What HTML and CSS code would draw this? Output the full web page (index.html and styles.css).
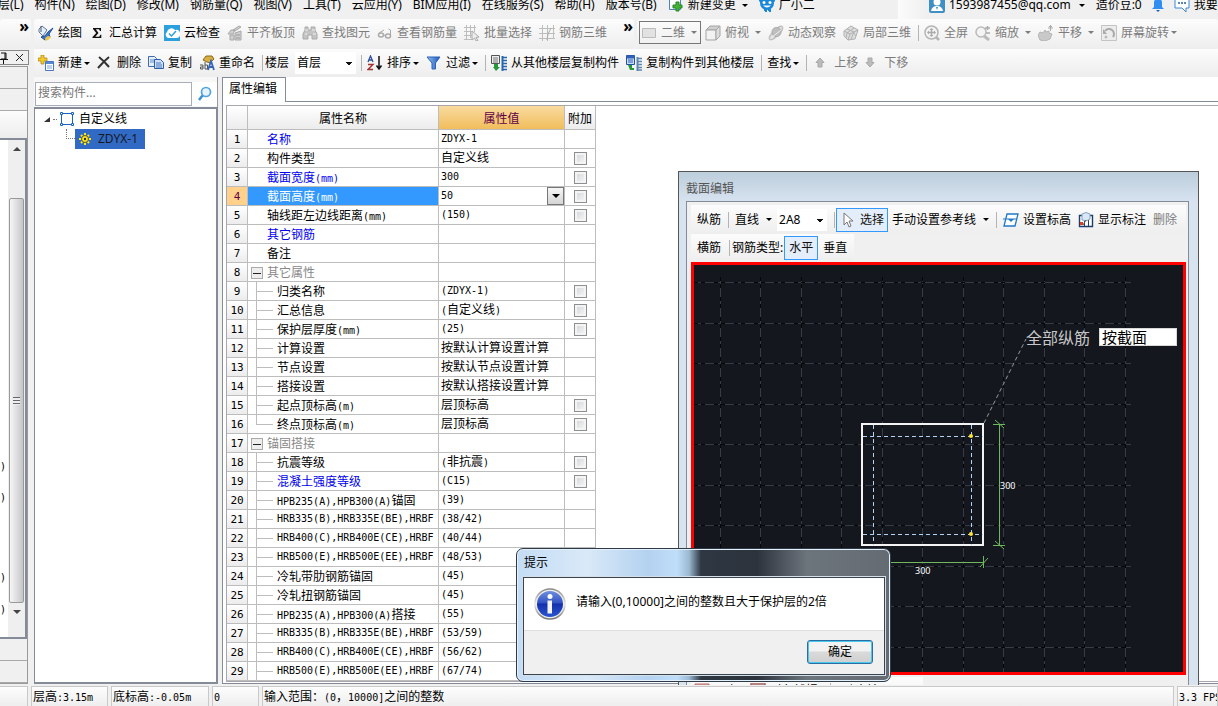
FILE: index.html
```html
<!DOCTYPE html>
<html lang="zh-CN">
<head>
<meta charset="utf-8">
<title>属性编辑</title>
<link rel="stylesheet" href="styles.css">
</head>
<body>
<svg class="defs" aria-hidden="true">
  <defs>
    <linearGradient id="funnel-fill" x1="0" x2="1"><stop offset="0" stop-color="#8fc0f4"/><stop offset="1" stop-color="#1d56b8"/></linearGradient>
    <linearGradient id="info-fill" x1="0" y1="0" x2="0" y2="1"><stop offset="0" stop-color="#6f8fdc"/><stop offset=".45" stop-color="#3454c4"/><stop offset=".5" stop-color="#1430ac"/><stop offset="1" stop-color="#2a55cf"/></linearGradient>
    <linearGradient id="ring-fill" x1="0" y1="0" x2="0" y2="1"><stop offset="0" stop-color="#8a8a8a"/><stop offset=".5" stop-color="#e8e8e8"/><stop offset="1" stop-color="#777"/></linearGradient>
    <symbol id="i-paint" viewBox="0 0 16 16"><path d="M1 4l3-3 5 4-4 6-4-4z" fill="#e8eef8" stroke="#5d7696"/><path d="M3 1v6" stroke="#44597a"/><path d="M15 3l-4 6 1 3-5 3-4-3 4-1 3-4z" fill="#3c78c8" stroke="#1f4a91"/><path d="M7 15c0-3 2-4 4-4l2 1c-2 3-4 4-6 3z" fill="#efc34c"/></symbol>
    <symbol id="i-sigma" viewBox="0 0 16 16"><path d="M4 3h8v3h-1l-1-1.800H6.800L9.500 8l-3.200 3.800h4l1-2h1V13H3.500v-1l3.700-4-3.200-4z" fill="#111"/></symbol>
    <symbol id="i-cloud" viewBox="0 0 16 16"><path d="M0 0h16v16H0z" fill="#2ba0dc"/><path d="M4 13a3.500 3.500 0 01-1-6 4.500 4.500 0 018-2 4 4 0 012 8z" fill="#fff"/><path d="M5 8.500l2.500 2.500L12 6" fill="none" stroke="#2ba0dc" stroke-width="1.500"/></symbol>
    <symbol id="i-slab" viewBox="0 0 16 16"><path d="M1 9l3-4h4l-2 4zM6 5l6-4 2 1-6 4zM3 10h4v5H3zM8 8l6-2v9H8z" fill="#cfcfcf" stroke="#a8a8a8"/><path d="M9 10h4M9 13h4" stroke="#999"/></symbol>
    <symbol id="i-bino" viewBox="0 0 16 16"><path d="M3 2h3v3h3V2h4v3l2 4v5h-5v-4H6v4H1V9l2-4z" fill="#c4c4c4" stroke="#aaa"/><path d="M3 9h2M11 9h3M3 5h3M10 5h3" stroke="#eee"/></symbol>
    <symbol id="i-glasses" viewBox="0 0 16 16"><ellipse cx="4" cy="10" rx="2.500" ry="2" fill="none" stroke="#aaa" stroke-width="1.500"/><ellipse cx="11" cy="11" rx="2.500" ry="2" fill="none" stroke="#aaa" stroke-width="1.500"/><path d="M6.500 10l2 .5M2 8l5-3M13.500 10V5l-2-1" fill="none" stroke="#aaa"/></symbol>
    <symbol id="i-batch" viewBox="0 0 16 16"><path d="M0 2.500h12M0 6.500h9M0 10.500h9M2.500 0v15M6.500 0v13M10.500 0v7M0 14.500h8" stroke="#bdbdbd" fill="none"/><path d="M8 6l7 6-3 .5 2 3-2 .5-1.500-3L8 15z" fill="#eee" stroke="#aaa"/></symbol>
    <symbol id="i-rebar" viewBox="0 0 16 16"><path d="M0 3.500h16M0 8.500h16M0 13.500h16M3.500 0v16M8.500 0v16M14.500 0v14" stroke="#bdbdbd" fill="none"/><path d="M12 3q-4 6-4 12" stroke="#aaa" fill="none"/></symbol>
    <symbol id="i-plane" viewBox="0 0 16 16"><path d="M1.500 3.500h13v9h-13z" fill="#e2e2e2" stroke="#bbb"/></symbol>
    <symbol id="i-cube" viewBox="0 0 16 16"><path d="M1 5l4-4h10l-4 4z" fill="#cfcfcf" stroke="#a5a5a5"/><path d="M1 5h10v10H1z" fill="#f2f2f2" stroke="#a5a5a5"/><path d="M11 5l4-4v10l-4 4z" fill="#ddd" stroke="#a5a5a5"/></symbol>
    <symbol id="i-orbit" viewBox="0 0 16 16"><ellipse cx="8" cy="8" rx="9" ry="3" transform="rotate(-45 8 8)" fill="#ddd" stroke="#bbb"/><circle cx="8.500" cy="7" r="4.500" fill="#bebebe" stroke="#aaa"/><path d="M3 13l10-8" stroke="#eee"/></symbol>
    <symbol id="i-local" viewBox="0 0 16 16"><path d="M1 6l7-5 7 4-3 9-7 1-4-4z" fill="#ddd" stroke="#b0b0b0"/><path d="M1 6l6 3 8-4M7 9l-2 6M4 4l7 3-3 7M11 3L4 8l-1 5M10 7l3 4" fill="none" stroke="#b0b0b0"/></symbol>
    <symbol id="i-full" viewBox="0 0 16 16"><circle cx="7.500" cy="7.500" r="6.500" fill="#f4f4f4" stroke="#b5b5b5" stroke-width="1.500"/><path d="M12 12l3 3" stroke="#b5b5b5" stroke-width="2.500"/><path d="M4 7.500h7M7.500 4v7" stroke="#aaa" stroke-width="1.500"/><path d="M3 7.500l2-2v4zM12 7.500l-2-2v4zM7.500 3l-2 2h4zM7.500 12l-2-2h4z" fill="#aaa"/></symbol>
    <symbol id="i-zoom" viewBox="0 0 16 16"><circle cx="6" cy="7" r="5" fill="#f4f4f4" stroke="#bbb" stroke-width="1.500"/><path d="M9 11l5 4" stroke="#bbb" stroke-width="3"/><path d="M10 3h5M12.500 1v4M11 8h4" stroke="#aaa" stroke-width="1.500"/></symbol>
    <symbol id="i-pan" viewBox="0 0 16 16"><path d="M2 7l3 1 2-3 1 2 3-1v2l3 1-2 5-5 2-5-1-2-5z" fill="#c9c9c9" stroke="#b5b5b5"/><path d="M10 3h5M12.500 0v6M11 1.500h3" stroke="#aaa"/></symbol>
    <symbol id="i-rotate" viewBox="0 0 16 16"><path d="M.5.5h15v15H.5z" fill="#ececec" stroke="#c4c4c4"/><path d="M4 6a5 5 0 118 6" fill="none" stroke="#aaa" stroke-width="2"/><path d="M2 4v5h4z" fill="#aaa"/><circle cx="5" cy="12" r="1.500" fill="#bbb"/></symbol>
    <symbol id="i-new" viewBox="0 0 16 16"><path d="M3 0h3v3h3v3H6v3H3V6H0V3h3z" fill="#f3c929" stroke="#a98112" stroke-width=".7"/><path d="M7.500 6.500h8v9h-8z" fill="#fff" stroke="#4a78c0"/><path d="M8 7h7v2H8z" fill="#5588d4"/><path d="M9 11h5M9 13h5" stroke="#7aa2dd"/></symbol>
    <symbol id="i-x" viewBox="0 0 16 16"><path d="M2 2q5 4 10 10M12 2Q7 6 1 13" fill="none" stroke="#333" stroke-width="2"/></symbol>
    <symbol id="i-copy" viewBox="0 0 16 16"><path d="M.5 1.500h6l2 2v8h-8z" fill="#e4eefc" stroke="#3f6cb0"/><path d="M2 5h5M2 7h5" stroke="#5e89c8"/><path d="M6.500 4.500h6l3 3v6h-9z" fill="#cfe0f8" stroke="#2d5ea8"/><path d="M8 8h5M8 10h6M8 12h6" stroke="#4b7ac0"/></symbol>
    <symbol id="i-rename" viewBox="0 0 16 16"><path d="M4 5l3-4h6l2 3-4 4-3-1z" fill="#d9ae45" stroke="#8b681b"/><path d="M1 10h3v4H1.500v-2H4M6 7v7h2.500v-4H6" fill="none" stroke="#555"/><path d="M9 15l3-9 3 9M10 12h4" fill="none" stroke="#3566b5" stroke-width="1.800"/></symbol>
    <symbol id="i-sort" viewBox="0 0 16 16"><path d="M1 7l2.500-6L6 7M2 5h3" fill="none" stroke="#2c4f9d" stroke-width="1.300"/><path d="M1 9.500h5l-5 5h5" fill="none" stroke="#a33232" stroke-width="1.400"/><path d="M12 1v12M9.500 10.500L12 14l2.500-3.500" fill="none" stroke="#111" stroke-width="1.500"/></symbol>
    <symbol id="i-funnel" viewBox="0 0 16 16"><path d="M1 2h13L9.500 8v6H6V8z" fill="url(#funnel-fill)" stroke="#2d63b8"/></symbol>
    <symbol id="i-from" viewBox="0 0 16 16"><path d="M.5.5h8v8h-8z" fill="#eee" stroke="#555"/><path d="M2 3h5M2 5h5M2 7h5" stroke="#777"/><path d="M11.500 1v15" stroke="#2767ae" stroke-width="2"/><path d="M12 2.500h4M12 5.500h4M12 8.500h4M12 11.500h4M12 14.500h4" stroke="#2767ae" stroke-width="1.500"/><path d="M3 9h4v3h2l-4 4-3-4h1z" fill="#27963c"/></symbol>
    <symbol id="i-to" viewBox="0 0 16 16"><path d="M.5.5h8v9h-8z" fill="#c9dbf5" stroke="#244f9e"/><path d="M1 1h7v2H1zM2 5h5M2 7h5" fill="#2e62ba" stroke="#2e62ba"/><path d="M11.500 2v14" stroke="#5f87b0" stroke-width="2"/><path d="M12 3.500h4M12 6.500h4M12 9.500h4M12 12.500h4M12 15h4" stroke="#5f87b0" stroke-width="1.500"/><path d="M2 10h4v3h2v2H4z" fill="#27963c"/></symbol>
    <symbol id="i-up" viewBox="0 0 16 16"><path d="M8 3l4 4.500h-2V12H6V7.500H4z" fill="#bbb" stroke="#a9a9a9"/></symbol>
    <symbol id="i-down" viewBox="0 0 16 16"><path d="M8 12l4-4.500h-2V3H6v4.500H4z" fill="#bbb" stroke="#a9a9a9"/></symbol>
    <symbol id="i-change" viewBox="0 0 16 16"><path d="M1.500 0v12.500h11V0" fill="#fff" stroke="#4787c4"/><path d="M8 5h3v3h3v3h-3v3H8v-3H5V8h3z" fill="#42b336" stroke="#2a8426"/></symbol>
    <symbol id="i-mascot" viewBox="0 0 16 16"><circle cx="8" cy="6" r="7" fill="#1b87d8"/><path d="M0 3l3 2M16 3l-3 2M5 13h2v2M9 13h2v2" stroke="#1b87d8" stroke-width="2"/><circle cx="5" cy="5.500" r="1.500" fill="#fff"/><circle cx="11" cy="5.500" r="1.500" fill="#fff"/><path d="M4 8.500q4 4 8 0z" fill="#fff"/></symbol>
    <symbol id="i-user" viewBox="0 0 16 16"><rect width="16" height="16" rx="2" fill="#3d8fc4"/><circle cx="8" cy="5" r="3.500" fill="#fff"/><path d="M2 14q1-5 6-5t6 5z" fill="#fff"/><path d="M7 10h2l-1 3z" fill="#3d8fc4"/></symbol>
    <symbol id="i-bell" viewBox="0 0 16 16"><path d="M4 10V5q1-4 4-4t4 4v5l2 2H2z" fill="#2e8ff0"/><path d="M6 13h4l-2 2z" fill="#1b62b0"/></symbol>
    <symbol id="i-chat" viewBox="0 0 16 16"><path d="M1 1h14v10h-3v4l-4-4H1z" fill="#fff" stroke="#3f86d6"/><path d="M4 6h2M7 6h2M10 6h2" stroke="#245da8" stroke-width="1.500"/></symbol>
    <symbol id="i-search" viewBox="0 0 16 16"><circle cx="9" cy="6" r="4.500" fill="#e6f4ff" stroke="#4fa3e0" stroke-width="1.700"/><path d="M5.500 9.500L2 14" stroke="#3a8fd4" stroke-width="2.500"/></symbol>
    <symbol id="i-frame" viewBox="0 0 16 16"><path d="M2.500 2.500h11v11h-11z" fill="#fff" stroke="#1763c6"/><path d="M1.500 1.500h2v2h-2zM12.500 1.500h2v2h-2zM1.500 12.500h2v2h-2zM12.500 12.500h2v2h-2z" fill="#fff" stroke="#1763c6"/></symbol>
    <symbol id="i-sun" viewBox="0 0 12 12"><path d="M6 0v12M0 6h12M2 2l8 8M10 2l-8 8" stroke="#ffe81a" stroke-width="2"/><circle cx="6" cy="6" r="3.500" fill="#ffe81a" stroke="#333" stroke-width=".8"/><circle cx="6" cy="6" r="1.200" fill="#333"/></symbol>
    <symbol id="i-cursor" viewBox="0 0 16 16"><path d="M4 1v12l3-3 2 5 2-1-2-5h4z" fill="#fff" stroke="#777"/></symbol>
    <symbol id="i-level" viewBox="0 0 16 16"><path d="M4 2h11l-3 12H1z" fill="#fff" stroke="#1f78c8" stroke-width="1.300"/><path d="M0 7h14" stroke="#1f78c8"/><path d="M5 7h6l-3 3z" fill="#1f78c8"/></symbol>
    <symbol id="i-dim" viewBox="0 0 16 16"><path d="M1.500 3.500h13v11h-13z" fill="#fff" stroke="#1b3e6d" stroke-width="1.400"/><path d="M6.500 7v8M10.500 7v8" stroke="#1b3e6d"/><path d="M4 2q4-3 8 0v5q-3 3-8 1z" fill="#d9e7f7" stroke="#8aa2bf"/><path d="M2 10h3v3H2z" fill="#e23b22"/><path d="M8 8l-3 5" stroke="#555"/></symbol>
    <symbol id="i-ortho" viewBox="0 0 16 16"><path d="M2 1h13v4H5v10H1V1z" fill="#e7a3a3" stroke="#b86a6a"/></symbol>
    <symbol id="i-snap" viewBox="0 0 16 16"><path d="M1 1h14v14H1z" fill="#fff" stroke="#a35b5b" stroke-width="1.500"/></symbol>
  </defs>
</svg>

<header class="menubar">
  <nav class="menus" aria-label="主菜单">
    <button>楼层(L)</button><button>构件(N)</button><button>绘图(D)</button><button>修改(M)</button><button>钢筋量(Q)</button><button>视图(V)</button><button>工具(T)</button><button>云应用(Y)</button><button>BIM应用(I)</button><button>在线服务(S)</button><button>帮助(H)</button><button>版本号(B)</button>
    <button><svg class="icon"><use href="#i-change"/></svg>新建变更<i class="caret"></i></button>
    <button><svg class="icon"><use href="#i-mascot"/></svg>广小二</button>
  </nav>
  <div class="account">
    <button><svg class="icon"><use href="#i-user"/></svg>1593987455@qq.com<i class="caret"></i></button>
    <span>造价豆:0</span>
    <button aria-label="通知"><svg class="icon"><use href="#i-bell"/></svg></button>
    <button><svg class="icon"><use href="#i-chat"/></svg>我要反馈</button>
  </div>
</header>

<div class="bar bar-view">
  <div class="strip strip-stub"><button aria-label="更多工具">»</button></div>
  <div class="strip strip-draw">
    <button><svg class="icon"><use href="#i-paint"/></svg>绘图</button>
    <button><svg class="icon"><use href="#i-sigma"/></svg>汇总计算</button>
    <button><svg class="icon"><use href="#i-cloud"/></svg>云检查</button>
    <button disabled><svg class="icon"><use href="#i-slab"/></svg>平齐板顶</button>
    <button disabled><svg class="icon"><use href="#i-bino"/></svg>查找图元</button>
    <button disabled><svg class="icon"><use href="#i-glasses"/></svg>查看钢筋量</button>
    <button disabled><svg class="icon"><use href="#i-batch"/></svg>批量选择</button>
    <button disabled><svg class="icon"><use href="#i-rebar"/></svg>钢筋三维</button>
    <button class="more" aria-label="更多">»</button>
  </div>
  <div class="strip strip-3d">
    <button class="boxed" disabled><svg class="icon"><use href="#i-plane"/></svg>二维<i class="caret far"></i></button>
    <button disabled><svg class="icon"><use href="#i-cube"/></svg>俯视<i class="caret"></i></button>
    <button disabled><svg class="icon"><use href="#i-orbit"/></svg>动态观察</button>
    <button disabled><svg class="icon"><use href="#i-local"/></svg>局部三维</button>
    <span class="sep"></span>
    <button disabled><svg class="icon"><use href="#i-full"/></svg>全屏</button>
    <button disabled><svg class="icon"><use href="#i-zoom"/></svg>缩放<i class="caret"></i></button>
    <button disabled><svg class="icon"><use href="#i-pan"/></svg>平移<i class="caret"></i></button>
    <button disabled><svg class="icon"><use href="#i-rotate"/></svg>屏幕旋转<i class="caret near"></i></button>
  </div>
</div>

<div class="workspace">
  <aside class="dock">
    <div class="dock-head">
      <button aria-label="固定"><svg width="8" height="12"><path d="M1 1h5v6H1M0 7.500h8M3.500 8v4M5 1v6" fill="none" stroke="#111"/></svg></button>
      <button aria-label="关闭"><svg width="9" height="9"><path d="M1 1l7 7M8 1L1 8" stroke="#222"/></svg></button>
    </div>
    <div class="dock-panel">
      <div class="dock-tab"></div>
      <div class="dock-tab"></div>
      <div class="dock-gap"></div>
      <div class="dock-list">
        <div class="dock-rows mono"><span class="r1">)</span><span class="r2">)</span><span class="r3">)</span><span class="r4">)</span></div>
        <div class="scroll">
          <i class="tri up"></i>
          <div class="thumb"><i class="grip"></i></div>
          <i class="tri down"></i>
        </div>
      </div>
      <div class="dock-tab"></div>
      <div class="dock-tab"></div>
    </div>
  </aside>

  <div class="content">
    <div class="bar bar-edit">
      <button><svg class="icon"><use href="#i-new"/></svg>新建<i class="caret near"></i></button>
      <button><svg class="icon"><use href="#i-x"/></svg>删除</button>
      <button><svg class="icon"><use href="#i-copy"/></svg>复制</button>
      <button><svg class="icon"><use href="#i-rename"/></svg>重命名</button>
      <span class="sep"></span>
      <label class="floor">楼层 <select><option>首层</option></select></label>
      <span class="sep"></span>
      <button><svg class="icon"><use href="#i-sort"/></svg>排序<i class="caret near"></i></button>
      <button><svg class="icon"><use href="#i-funnel"/></svg>过滤<i class="caret near"></i></button>
      <span class="sep"></span>
      <button><svg class="icon"><use href="#i-from"/></svg>从其他楼层复制构件</button>
      <button><svg class="icon"><use href="#i-to"/></svg>复制构件到其他楼层</button>
      <span class="sep"></span>
      <button>查找<i class="caret near"></i></button>
      <span class="sep"></span>
      <button disabled><svg class="icon"><use href="#i-up"/></svg>上移</button>
      <button disabled><svg class="icon"><use href="#i-down"/></svg>下移</button>
    </div>

    <div class="panes">
      <section class="members">
        <form class="search"><input type="text" placeholder="搜索构件..." aria-label="搜索构件"><button type="button" aria-label="搜索"><svg class="icon"><use href="#i-search"/></svg></button></form>
        <div class="tree">
          <div class="node"><svg width="7" height="7"><path d="M6 1v5H0z" fill="#333"/></svg><i class="dots"></i><svg class="icon"><use href="#i-frame"/></svg><span>自定义线</span></div>
          <div class="leaf"><i class="elbow"></i><span class="picked"><svg width="12" height="12"><use href="#i-sun"/></svg>ZDYX-1</span></div>
        </div>
      </section>

      <section class="props">
        <div class="tabs"><button class="tab">属性编辑</button></div>
        <div class="sheet">
          <table>
            <colgroup><col class="c-no"><col class="c-name"><col class="c-val"><col class="c-add"></colgroup>
            <thead><tr><th></th><th>属性名称</th><th class="hot">属性值</th><th>附加</th></tr></thead>
            <tbody>
              <tr><th>1</th><td class="top key">名称</td><td class="mono">ZDYX-1</td><td></td></tr>
              <tr><th>2</th><td class="top">构件类型</td><td>自定义线</td><td><input type="checkbox" aria-label="附加构件类型"></td></tr>
              <tr><th>3</th><td class="top key">截面宽度<span class="mono">(mm)</span></td><td class="mono">300</td><td><input type="checkbox" aria-label="附加截面宽度"></td></tr>
              <tr class="current"><th>4</th><td class="top key">截面高度<span class="mono">(mm)</span></td><td><div class="combo"><input class="mono" type="text" value="50" aria-label="截面高度"><button aria-label="展开"><i class="caret"></i></button></div></td><td><input type="checkbox" aria-label="附加截面高度"></td></tr>
              <tr><th>5</th><td class="top">轴线距左边线距离<span class="mono">(mm)</span></td><td class="mono">(150)</td><td><input type="checkbox" aria-label="附加轴线距离"></td></tr>
              <tr><th>6</th><td class="top key">其它钢筋</td><td></td><td></td></tr>
              <tr><th>7</th><td class="top">备注</td><td></td><td></td></tr>
              <tr><th>8</th><td class="group"><div><button aria-label="折叠其它属性"></button>其它属性</div></td><td></td><td></td></tr>
              <tr><th>9</th><td class="sub">归类名称</td><td class="mono">(ZDYX-1)</td><td><input type="checkbox" aria-label="附加归类名称"></td></tr>
              <tr><th>10</th><td class="sub">汇总信息</td><td><span class="mono">(</span>自定义线<span class="mono">)</span></td><td><input type="checkbox" aria-label="附加汇总信息"></td></tr>
              <tr><th>11</th><td class="sub">保护层厚度<span class="mono">(mm)</span></td><td class="mono">(25)</td><td><input type="checkbox" aria-label="附加保护层厚度"></td></tr>
              <tr><th>12</th><td class="sub">计算设置</td><td>按默认计算设置计算</td><td></td></tr>
              <tr><th>13</th><td class="sub">节点设置</td><td>按默认节点设置计算</td><td></td></tr>
              <tr><th>14</th><td class="sub">搭接设置</td><td>按默认搭接设置计算</td><td></td></tr>
              <tr><th>15</th><td class="sub">起点顶标高<span class="mono">(m)</span></td><td>层顶标高</td><td><input type="checkbox" aria-label="附加起点顶标高"></td></tr>
              <tr><th>16</th><td class="sub last">终点顶标高<span class="mono">(m)</span></td><td>层顶标高</td><td><input type="checkbox" aria-label="附加终点顶标高"></td></tr>
              <tr><th>17</th><td class="group"><div><button aria-label="折叠锚固搭接"></button>锚固搭接</div></td><td></td><td></td></tr>
              <tr><th>18</th><td class="sub">抗震等级</td><td><span class="mono">(</span>非抗震<span class="mono">)</span></td><td><input type="checkbox" aria-label="附加抗震等级"></td></tr>
              <tr><th>19</th><td class="sub key">混凝土强度等级</td><td class="mono">(C15)</td><td><input type="checkbox" aria-label="附加混凝土强度等级"></td></tr>
              <tr><th>20</th><td class="sub"><span class="mono">HPB235(A),HPB300(A)</span>锚固</td><td class="mono">(39)</td><td></td></tr>
              <tr><th>21</th><td class="sub mono">HRB335(B),HRB335E(BE),HRBF</td><td class="mono">(38/42)</td><td></td></tr>
              <tr><th>22</th><td class="sub mono">HRB400(C),HRB400E(CE),HRBF</td><td class="mono">(40/44)</td><td></td></tr>
              <tr><th>23</th><td class="sub mono">HRB500(E),HRB500E(EE),HRBF</td><td class="mono">(48/53)</td><td></td></tr>
              <tr><th>24</th><td class="sub">冷轧带肋钢筋锚固</td><td class="mono">(45)</td><td></td></tr>
              <tr><th>25</th><td class="sub">冷轧扭钢筋锚固</td><td class="mono">(45)</td><td></td></tr>
              <tr><th>26</th><td class="sub"><span class="mono">HPB235(A),HPB300(A)</span>搭接</td><td class="mono">(55)</td><td></td></tr>
              <tr><th>27</th><td class="sub mono">HRB335(B),HRB335E(BE),HRBF</td><td class="mono">(53/59)</td><td></td></tr>
              <tr><th>28</th><td class="sub mono">HRB400(C),HRB400E(CE),HRBF</td><td class="mono">(56/62)</td><td></td></tr>
              <tr><th>29</th><td class="sub mono">HRB500(E),HRB500E(EE),HRBF</td><td class="mono">(67/74)</td><td></td></tr>
            </tbody>
          </table>
        </div>
      </section>
    </div>
  </div>

  <section class="editor" aria-label="截面编辑">
    <h2>截面编辑</h2>
    <div class="editor-body">
      <div class="tools tools-top">
        <button>纵筋</button><span class="sep"></span>
        <button>直线<i class="caret"></i></button>
        <select class="spec" aria-label="钢筋规格"><option>2A8</option></select><span class="sep"></span>
        <button class="on"><svg class="icon"><use href="#i-cursor"/></svg>选择</button>
        <button>手动设置参考线<i class="caret"></i></button><span class="sep"></span>
        <button><svg class="icon"><use href="#i-level"/></svg>设置标高</button>
        <button><svg class="icon"><use href="#i-dim"/></svg>显示标注</button>
        <button disabled>删除</button>
      </div>
      <div class="tools tools-type">
        <button>横筋</button><span class="sep"></span><span>钢筋类型:</span><button class="on">水平</button><button>垂直</button>
      </div>
      <div class="canvas">
        <svg class="drawing" width="100%" height="100%">
          <defs><path id="grid" d="M0 17.500h437M0 58.500h437M0 98.500h437M0 139.500h437M0 179.500h437M0 220.500h437M0 260.500h437M0 301.500h437M0 341.500h437M0 382.500h437M26.500 12v400M66.500 12v400M107.500 12v400M147.500 12v400M188.500 12v400M228.500 12v400M269.500 12v400M309.500 12v400M350.500 12v400M390.500 12v400M431.500 12v400"/></defs>
          <use href="#grid" stroke="#363c46"/>
          <use href="#grid" stroke="#050608" stroke-dasharray="4 3 4 9"/>
          <path d="M290 158L332 74" stroke="#999" stroke-dasharray="4 3"/>
          <path d="M168 159h121v121H168z" fill="none" stroke="#f4f4f4" stroke-width="2"/>
          <path d="M169 171.500h120M169 269.500h120M179.500 160v120M277.500 160v120" stroke="#b4d2f4" stroke-dasharray="4 3"/>
          <circle cx="277" cy="171" r="2" fill="#ffe42e"/><circle cx="277" cy="269" r="2" fill="#ffe42e"/>
          <path d="M305.500 159v122M299 159.500h12M299 280.500h12M301 155l9 8M301 276l9 8M180 297.500h110M289.500 291v12M286 302l8-9" fill="none" stroke="#6fb85f"/>
          <text x="306" y="224">300</text><text x="221" y="309">300</text>
          <text class="note" x="332" y="79">全部纵筋</text>
        </svg>
        <input class="inline-edit" type="text" value="按截面" aria-label="全部纵筋">
      </div>
      <div class="tools tools-foot"><button><svg class="icon"><use href="#i-ortho"/></svg>正交</button><button><svg class="icon"><use href="#i-snap"/></svg>对象捕捉</button><span class="sep"></span><button>动态输入</button></div>
    </div>
  </section>

  <div class="dialog" role="dialog" aria-labelledby="tip-title">
    <h2 id="tip-title">提示</h2>
    <div class="dialog-body">
      <div class="message">
        <svg width="32" height="32"><circle cx="16" cy="16" r="15" fill="#eee" stroke="url(#ring-fill)" stroke-width="1.500"/><circle cx="16" cy="16" r="13" fill="url(#info-fill)"/><circle cx="16" cy="8.500" r="2.500" fill="#fff"/><path d="M13.500 12.500h4.500v13h-4.500z" fill="#f4f4f4"/></svg>
        <p>请输入(0,10000]之间的整数且大于保护层的2倍</p>
      </div>
      <div class="actions"><button>确定</button></div>
    </div>
  </div>
</div>

<footer class="status">
  <span class="s-stub"></span>
  <span class="s-height">层高<b class="mono">:3.15m</b></span>
  <span class="s-base">底标高<b class="mono">:-0.05m</b></span>
  <span class="s-count"><b class="mono">0</b></span>
  <span class="s-hint">输入范围：<b class="mono">(0</b>，<b class="mono">10000]</b>之间的整数</span>
  <span class="s-fps"><b class="mono">3.3 FPS</b></span>
</footer>
</body>
</html>
```
FILE: styles.css
```css
* { box-sizing: border-box; }
body {
  margin: 0;
  height: 100vh;
  display: flex;
  flex-direction: column;
  overflow: hidden;
  background: #f0f0f0;
  color: #000;
  font: 12px/16px "Noto Sans", "Noto Sans CJK SC", sans-serif;
}
button, input, select { font: inherit; color: inherit; }
button { border: 0; padding: 0; background: none; display: flex; align-items: center; white-space: nowrap; gap: 4px; }
button:disabled { color: #7c7c7c; }
.mono { font-family: "DejaVu Sans Mono", "Noto Sans CJK SC", monospace; font-size: 10px; font-weight: normal; line-height: 16px; }
.defs { position: absolute; width: 0; height: 0; }
.icon { width: 16px; height: 16px; flex: none; }
.caret { width: 0; height: 0; border: 3px solid transparent; border-top-color: currentColor; border-bottom: 0; margin: 0 0 0 2px; }
.caret.near { margin-left: -2px; }
.sep { width: 1px; height: 16px; background: #b4b4b4; flex: none; }

/* menu bar */
.menubar { display: flex; justify-content: space-between; height: 19px; flex: none; white-space: nowrap; }
.menubar button, .menubar span { line-height: 10px; height: 10px; flex: none; }
.menus { display: flex; gap: 11px; margin-left: -14px; }
.account { display: flex; gap: 8px; width: 320px; padding-left: 31px; overflow: hidden; background: linear-gradient(90deg, #fbfbfb, #f0f0f0 28px); }
.account .caret { margin: 0 3px 0 4px; }

/* toolbars */
.bar { display: flex; flex: none; }
.bar-view { height: 30px; gap: 3px; }
.strip { display: flex; align-items: center; gap: 7px; padding-bottom: 3px; background: linear-gradient(#fcfcfc, #ededed); border-radius: 3px; }
.strip-stub { width: 31px; flex: none; justify-content: flex-end; align-items: flex-start; padding: 0 2px; }
.strip-stub button, .more { font-size: 16px; font-weight: bold; line-height: 14px; }
.strip-draw { padding-left: 4px; width: 600px; flex: none; }
.more { margin: -14px 0 0 9px; }
.strip-3d { flex: 1; padding-left: 2px; }
.strip-3d .caret { margin-left: 2px; }
.strip-3d .caret.near { margin-left: -2px; }
.strip-3d .sep { margin-right: -2px; }
.boxed { border: 1px solid #777; height: 23px; width: 62px; padding: 0 1px; margin-right: -3px; }
.bar-edit { height: 28px; align-items: center; gap: 7px; padding: 0 0 0 4px; background: linear-gradient(#fcfcfc, #ededed); }
.bar-edit .sep { margin-right: -2px; }
.bar-edit button:disabled { gap: 6px; margin-right: -3px; }
.floor { display: flex; align-items: center; gap: 6px; margin: 0 -2px 0 -3px; }
select {
  appearance: none;
  border: 0;
  background:
    linear-gradient(#111, #111) no-repeat right 4px top 10px / 6px 1px,
    linear-gradient(#111, #111) no-repeat right 5px top 11px / 4px 1px,
    linear-gradient(#111, #111) no-repeat right 6px top 12px / 2px 1px,
    #fff;
}
.floor select { width: 61px; height: 22px; padding: 0 2px; }

/* workspace */
.workspace { position: relative; flex: 1; display: flex; min-height: 0; overflow: hidden; gap: 5px; }
.content { flex: 1; display: flex; flex-direction: column; min-width: 0; }
.panes { flex: 1; display: flex; gap: 4px; min-height: 0; padding-bottom: 2px; }
.dock { width: 29px; flex: none; display: flex; flex-direction: column; padding-bottom: 2px; }
.dock-head { display: flex; align-items: center; justify-content: space-between; height: 15px; margin-top: 1px; padding-right: 4px; border: 1px solid #888; border-left: 0; }
.dock-panel { flex: 1; display: flex; flex-direction: column; border: 1px solid #999; border-left: 0; margin-right: 1px; margin-top: 1px; }
.dock-tab { height: 22px; border-bottom: 1px solid #aaa; }
.dock-gap { height: 27px; background: linear-gradient(#fcfcfc, #ededed); }
.dock-list { flex: 1; display: flex; border: 2px solid #858b98; border-left: 0; background: #fff; min-height: 0; }
.dock-rows { flex: 1; position: relative; }
.dock-rows span { position: absolute; left: 0; }
.r1 { bottom: 162px; } .r2 { bottom: 131px; } .r3 { bottom: 51px; } .r4 { bottom: 19px; }
.scroll { width: 17px; display: flex; flex-direction: column; align-items: center; background: #efefef; padding: 7px 0 23px; }
.thumb { flex: 1; width: 15px; margin: 47px 0 7px; border: 1px solid #999; border-radius: 2px; background: linear-gradient(90deg, #f6f6f6, #c6c6ca); display: flex; align-items: center; justify-content: center; }
.grip { width: 7px; height: 8px; background: repeating-linear-gradient(#666 0 1px, #eee 1px 3px); }
.tri { border: 4px solid transparent; height: 0; width: 0; }
.tri.up { border-bottom-color: #444; border-top: 0; }
.tri.down { border-top-color: #444; border-bottom: 0; }

/* member tree */
.members { width: 184px; flex: none; display: flex; flex-direction: column; }
.search { display: flex; height: 30px; padding: 5px 0 1px 1px; background: #f7f7f7; border-right: 1px solid #999; }
.search input { width: 157px; border: 1px solid #a9adb8; padding: 0 2px 3px; background: #fff; }
.search input::placeholder { color: #777; opacity: 1; }
.search button { flex: 1; justify-content: center; background: #fff; }
.tree { flex: 1; border: 2px solid #858b98; border-left-width: 1px; background: #fff; }
.node { display: flex; align-items: center; height: 20px; padding-left: 9px; }
.dots { width: 4px; margin: 0 2px; border-top: 1px dotted #777; }
.node span { margin-left: 4px; }
.leaf { display: flex; height: 20px; padding-left: 31px; }
.elbow { width: 9px; height: 10px; border: 1px dotted #777; border-width: 0 0 1px 1px; }
.picked { display: flex; align-items: center; gap: 7px; width: 70px; padding-left: 4px; background: #316ac5; color: #16181d; }

/* property sheet */
.props { flex: 1; display: flex; flex-direction: column; min-width: 0; background: #fff; border-left: 1px solid #858b98; border-bottom: 1px solid #858b98; padding-bottom: 1px; }
.tabs { height: 25px; flex: none; display: flex; border-bottom: 1px solid #858b98; }
.tab { height: 25px; width: 63px; padding: 0 6px 2px; border: 1px solid #858b98; border-width: 1px 1px 0 0; background: #fff; }
.sheet { flex: 1; min-height: 0; overflow: hidden; margin: 3px 0 0 3px; border: 1px solid #a7a7ad; border-right: 0; }
table { table-layout: fixed; width: 369px; border-collapse: separate; border-spacing: 0; }
.c-no { width: 21px; } .c-name { width: 191px; } .c-val { width: 126px; } .c-add { width: 31px; }
th, td { padding: 0; height: 19px; line-height: 16px; border-right: 1px solid #bdbdbd; border-bottom: 1px solid #bdbdbd; font-weight: normal; white-space: nowrap; overflow: hidden; }
td span.mono { line-height: 10px; }
th { background: linear-gradient(#fff, #ececec); text-align: center; }
thead th { height: 24px; padding-top: 2px; }
tbody th { font-family: "DejaVu Sans Mono", monospace; font-size: 11px; padding-top: 1px; }
thead .hot { background: linear-gradient(#f9dba0, #f1bd5c); color: #620046; }
tbody td:nth-child(2) { padding-top: 2px; }
tbody td.mono:nth-child(2) { padding-top: 0; }
tbody td:nth-child(3) { padding-left: 2px; }
tbody td:nth-child(4) { text-align: center; }
.top { padding-left: 19px; }
.key { color: #00e; }
.current th { background: #ffd18a; color: #620046; }
.current .key { background: #3399ff; color: #fff; }
.sub { padding-left: 29px; background: linear-gradient(#bdbdbd, #bdbdbd) no-repeat 8px 0 / 1px 100%, linear-gradient(#bdbdbd, #bdbdbd) no-repeat 8px 9px / 17px 1px; }
.sub.last { background-size: 1px 10px, 17px 1px; }
.group { color: #888; }
.group div { display: flex; align-items: center; gap: 4px; height: 16px; padding-left: 3px; }
.group button { width: 12px; height: 12px; border: 1px solid #aaa; background: linear-gradient(#222, #222) no-repeat center / 8px 1px, #eee; }
input[type="checkbox"] { appearance: none; display: block; width: 13px; height: 13px; margin: 0 auto; border: 1px solid #8e8f8f; background: linear-gradient(135deg, #cfd2d6, #fafafa); box-shadow: inset 0 0 0 2px #f4f4f4; }
.combo { display: flex; height: 18px; }
.combo input { flex: 1; min-width: 0; border: 0; padding: 0; background: none; }
.combo button { width: 17px; justify-content: center; border: 1px solid #777; background: linear-gradient(#f6f6f6, #d4d4d4); }
.combo .caret { margin: 0; border-width: 4px 4px 0; }

/* section editor window */
.editor { position: absolute; left: 678px; top: 122px; bottom: 1px; width: 521px; display: flex; flex-direction: column; padding: 0 9px 0 7px; border: 1px solid #555; border-bottom: 0; background: linear-gradient(#bccddb, #d8e3f0 30px); }
h2 { margin: 0; font-size: 12px; font-weight: normal; }
.editor h2 { height: 29px; line-height: 33px; color: #555; }
.editor-body { flex: 1; min-height: 0; display: flex; flex-direction: column; overflow: hidden; border: 1px solid #858b98; border-bottom: 0; background: #f0f0f0; padding: 3px 2px 0 4px; }
.tools { display: flex; align-items: center; gap: 6px; flex: none; background: linear-gradient(#fcfcfc, #eee); }
.tools-top { height: 29px; padding-left: 6px; gap: 7px; }
.tools-top .caret { margin-left: 3px; }
.tools .on { height: 24px; padding: 0 3px; border: 1px solid #3399ff; background: #e4eefa; color: #111; }
.tools-top .on { margin: 0 -3px 0 -5px; }
.tools-top .sep { margin-right: -1px; }
.spec { width: 50px; height: 22px; padding: 0 2px; margin-left: -2px; }
.tools-type { height: 28px; width: 163px; padding: 0 0 1px 6px; gap: 5px; }
.tools-type span:nth-of-type(2) { margin: 0 -4px 0 -3px; }
.tools-type .sep { margin-left: 3px; }
.tools-type .on { padding: 0 4px; }
.canvas { position: relative; height: 413px; flex: none; border: 3px solid #f00; background: #14171e; }
.drawing { display: block; }
.drawing text { fill: #fff; font: 9px "Noto Sans", sans-serif; }
.drawing .note { fill: #c8c8c8; font: 16px "Noto Sans CJK SC", sans-serif; }
.inline-edit { position: absolute; left: 405px; top: 63px; width: 78px; height: 18px; padding: 0 2px 2px; border: 1px solid #d8d8d8; background: #fff; font-size: 15px; line-height: 16px; }
.tools-foot { align-items: flex-start; gap: 12px; height: 28px; width: 232px; padding: 6px 0 0 3px; margin-top: 2px; }

/* message box */
.dialog { position: absolute; left: 516px; top: 499px; width: 375px; padding: 0 5px 6px 6px; border: 1px solid #2e3a48; border-radius: 7px; box-shadow: inset 0 0 0 1px #e4f0fa; background: linear-gradient(90deg, #c4dcf5, #d9e9f8 70px, #b4d2f0 130px, #bfdef9 160px, #9bb9d2 172px, #2e3742 184px, #2c333d 240px, #6c747c 290px, #646b73); }
.dialog h2 { height: 28px; padding: 6px 0 0 1px; line-height: 16px; }
.dialog-body { border: 1px solid #3a4450; box-shadow: 0 0 0 1px #d5dfe8; background: #f0f0f0; }
.message { display: flex; gap: 10px; height: 53px; padding: 10px 0 0 10px; background: #fff; border-bottom: 1px solid #dfdfdf; }
.message p { margin: 6px 0 0; }
.actions { display: flex; justify-content: flex-end; padding: 9px 11px 10px; }
.actions button { width: 66px; height: 24px; justify-content: center; border: 1px solid #2c6e9f; border-radius: 3px; box-shadow: inset 0 0 0 1px #49c8ef; background: linear-gradient(#f2f2f2 45%, #dadada 50%, #cfcfcf); }

/* status bar */
.status { display: flex; gap: 3px; height: 20px; flex: none; white-space: nowrap; }
.status span { border: 1px solid #c9c9c9; border-width: 1px 1px 0; padding: 2px 1px 0; background: linear-gradient(#fdfdfd, #eee); overflow: hidden; line-height: 16px; }
.status .s-stub { width: 28px; border-left: 0; }
.s-height { width: 77px; } .s-base { width: 98px; } .s-count { width: 47px; } .s-hint { flex: 1; } .s-fps { width: 41px; }
```
